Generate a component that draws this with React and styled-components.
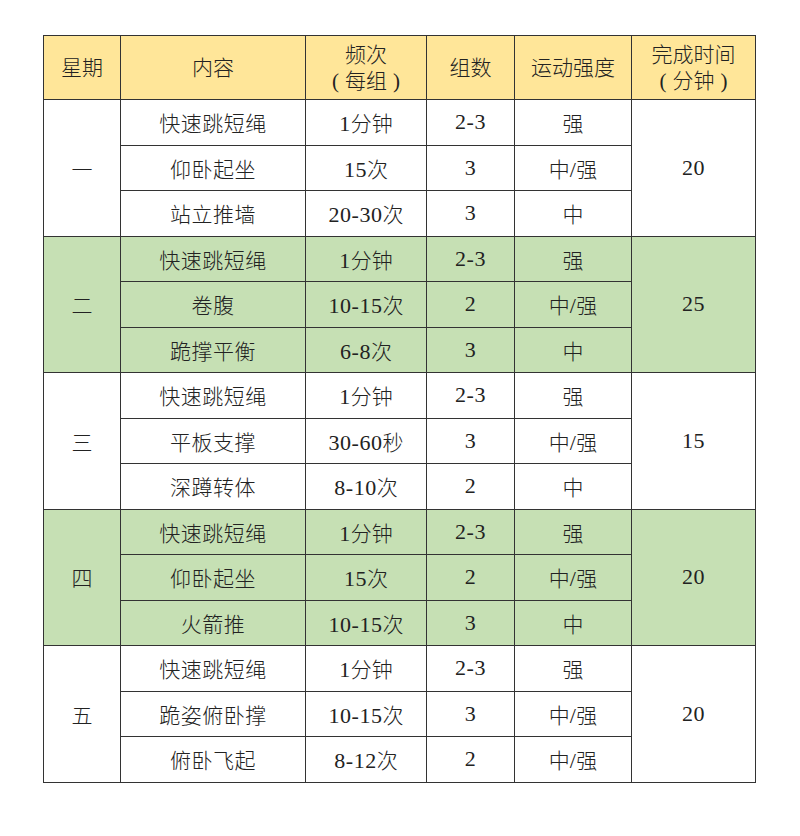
import styled, { createGlobalStyle } from 'styled-components';

const GlobalStyle = createGlobalStyle`
  html, body {
    margin: 0;
    padding: 0;
    background: #ffffff;
  }
  body {
    font-family: "Liberation Serif", "Noto Sans CJK SC", serif;
  }
`;

const YELLOW = '#ffe699';
const GREEN = '#c6e0b4';

const plan = [
  {
    day: '一',
    time: '20',
    items: [
      ['快速跳短绳', '1分钟', '2-3', '强'],
      ['仰卧起坐', '15次', '3', '中/强'],
      ['站立推墙', '20-30次', '3', '中'],
    ],
  },
  {
    day: '二',
    time: '25',
    items: [
      ['快速跳短绳', '1分钟', '2-3', '强'],
      ['卷腹', '10-15次', '2', '中/强'],
      ['跪撑平衡', '6-8次', '3', '中'],
    ],
  },
  {
    day: '三',
    time: '15',
    items: [
      ['快速跳短绳', '1分钟', '2-3', '强'],
      ['平板支撑', '30-60秒', '3', '中/强'],
      ['深蹲转体', '8-10次', '2', '中'],
    ],
  },
  {
    day: '四',
    time: '20',
    items: [
      ['快速跳短绳', '1分钟', '2-3', '强'],
      ['仰卧起坐', '15次', '2', '中/强'],
      ['火箭推', '10-15次', '3', '中'],
    ],
  },
  {
    day: '五',
    time: '20',
    items: [
      ['快速跳短绳', '1分钟', '2-3', '强'],
      ['跪姿俯卧撑', '10-15次', '3', '中/强'],
      ['俯卧飞起', '8-12次', '2', '中/强'],
    ],
  },
];

const widths = [77, 185, 121, 88, 117, 124];

const Page = styled.div`
  padding: 35px 0 0 43px;
`;

const Table = styled.table`
  border-collapse: collapse;
  table-layout: fixed;
  width: 712px;
  border: 1.5px solid #333333;
  color: #222222;
  font-size: 21px;
`;

const HeadRow = styled.tr`
  height: 64px;
  background: ${YELLOW};
`;

const Row = styled.tr`
  height: 45.5px;
  background: ${p => (p.$green ? GREEN : '#ffffff')};
`;

const Th = styled.th`
  border: 1px solid #333333;
  font-weight: 300;
  line-height: 26px;
  padding: 0;
  text-align: center;
  vertical-align: middle;
`;

const Td = styled.td`
  border: 1px solid #333333;
  font-weight: 300;
  padding: 0;
  text-align: center;
  vertical-align: middle;
  letter-spacing: ${p => (p.$wide ? '0.5px' : '0')};
`;

const Num = styled.span`
  font-size: 22px;
  letter-spacing: 0.5px;
`;

// full-width bracket: keep its whole em cell, with a gap to the enclosed text
const Bracket = styled.span`
  display: inline-block;
  width: 1em;
  text-align: ${p => (p.$open ? 'right' : 'left')};
  padding: ${p => (p.$open ? '0 6px 0 0' : '0 0 0 6px')};
  box-sizing: border-box;
`;

const Sub = ({ children }) => (
  <>
    <Bracket $open>(</Bracket>
    {children}
    <Bracket>)</Bracket>
  </>
);

// digits and dashes in a Latin face, Chinese falls back to Noto
const withNums = text =>
  text.split(/([0-9-/]+)/).map((part, i) =>
    /^[0-9-/]+$/.test(part) ? <Num key={i}>{part}</Num> : part
  );

export default function App() {
  return (
    <Page>
      <GlobalStyle />
      <Table>
        <colgroup>
          {widths.map((w, i) => (
            <col key={i} style={{ width: w }} />
          ))}
        </colgroup>
        <thead>
          <HeadRow>
            <Th>星期</Th>
            <Th>内容</Th>
            <Th>
              频次
              <br />
              <Sub>每组</Sub>
            </Th>
            <Th>组数</Th>
            <Th>运动强度</Th>
            <Th>
              完成时间
              <br />
              <Sub>分钟</Sub>
            </Th>
          </HeadRow>
        </thead>
        <tbody>
          {plan.map((g, gi) =>
            g.items.map((it, i) => (
              <Row key={`${gi}-${i}`} $green={gi % 2 === 1}>
                {i === 0 && <Td rowSpan={3}>{g.day}</Td>}
                <Td $wide>{it[0]}</Td>
                <Td>{withNums(it[1])}</Td>
                <Td>{withNums(it[2])}</Td>
                <Td>{withNums(it[3])}</Td>
                {i === 0 && <Td rowSpan={3}>{withNums(g.time)}</Td>}
              </Row>
            ))
          )}
        </tbody>
      </Table>
    </Page>
  );
}
